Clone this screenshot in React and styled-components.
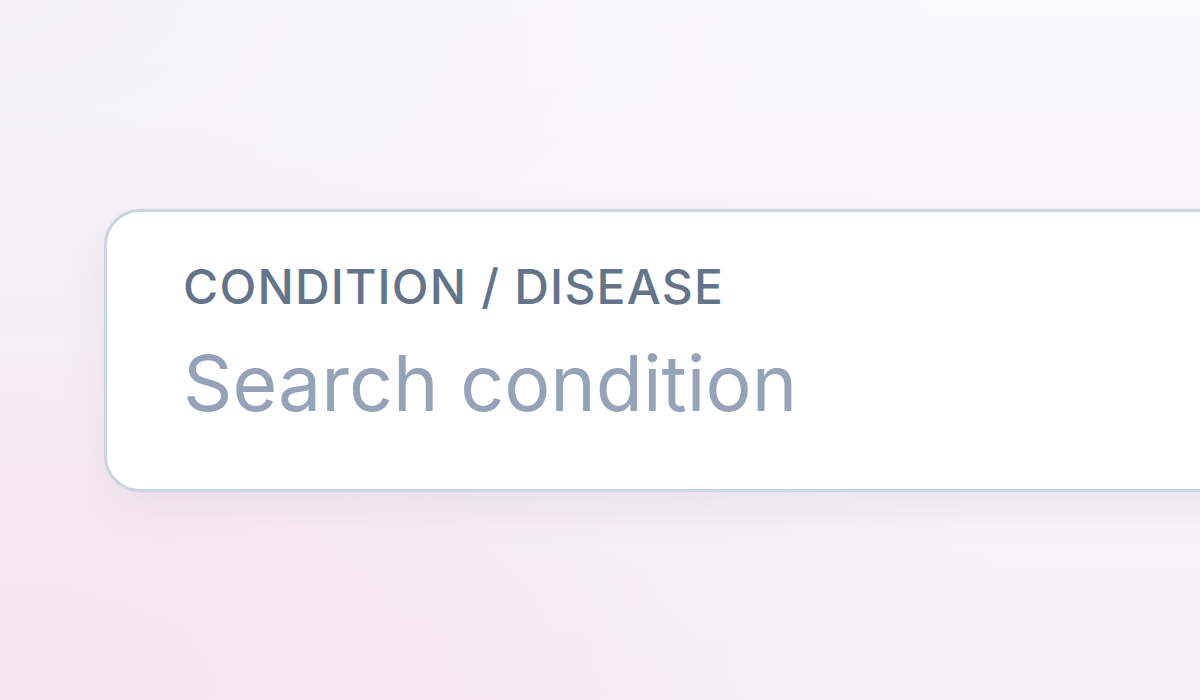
import React from "react";
import styled, { createGlobalStyle } from "styled-components";

const GlobalStyle = createGlobalStyle`
  * {
    box-sizing: border-box;
  }

  body {
    margin: 0;
    font-family: "Inter", "Noto Sans", sans-serif;
  }
`;

const Page = styled.div`
  width: 100vw;
  height: 100vh;
  overflow: hidden;
  padding: 209px 0 0 104px;
  background:
    radial-gradient(ellipse at 0% 100%, #f6e4f1 0%, rgba(246, 228, 241, 0) 60%),
    radial-gradient(ellipse at 0% 0%, #f4f1fb 0%, rgba(244, 241, 251, 0) 55%),
    linear-gradient(180deg, #f9f8fb 0%, #f7f1f7 100%);
`;

const Field = styled.label`
  display: flex;
  flex-direction: column;
  width: 1400px;
  height: 283px;
  padding: 51px 0 0 76px;
  background: #fff;
  border: 3px solid #cbd5e1;
  border-radius: 36px;
  box-shadow: 0 16px 40px rgba(120, 110, 150, 0.1);
`;

const Label = styled.span`
  font-size: 48px;
  line-height: 1;
  font-weight: 500;
  letter-spacing: 1.2px;
  text-transform: uppercase;
  color: #64748b;
`;

const Input = styled.input`
  margin-top: 33px;
  padding: 0;
  border: none;
  outline: none;
  background: transparent;
  font-family: inherit;
  font-size: 77px;
  line-height: 1;
  height: 78px;
  color: #334155;

  &::placeholder {
    color: #94a3b8;
  }
`;

export default function App() {
  return (
    <>
      <GlobalStyle />
      <Page>
        <Field>
          <Label>Condition / Disease</Label>
          <Input type="text" placeholder="Search condition" />
        </Field>
      </Page>
    </>
  );
}
